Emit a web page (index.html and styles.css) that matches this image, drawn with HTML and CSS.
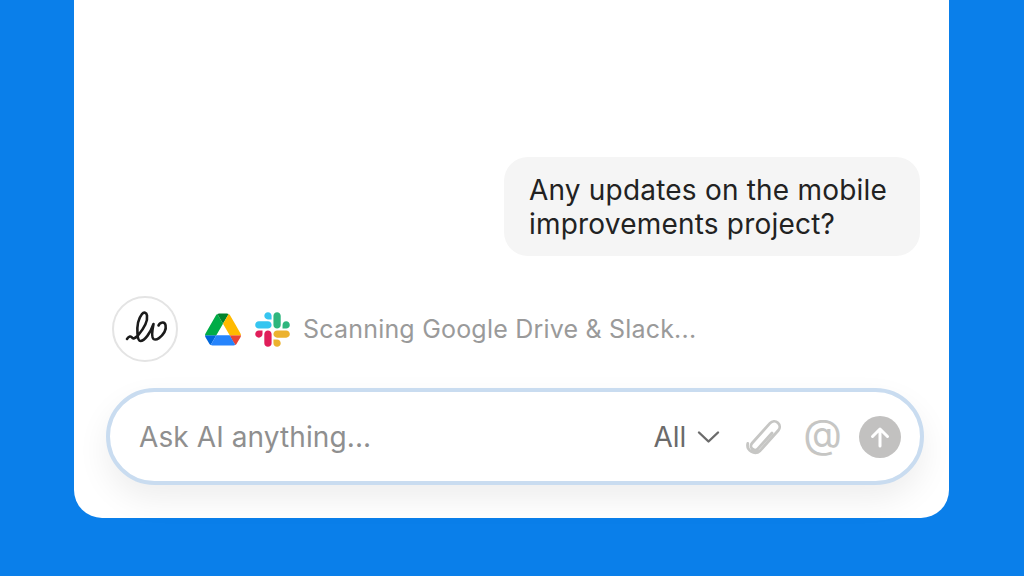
FILE: index.html

```html
<!DOCTYPE html>
<html lang="en">
<head>
    <meta charset="UTF-8">
    <meta name="viewport" content="width=device-width, initial-scale=1.0">
    <title>Ask AI</title>
    <link rel="stylesheet" href="styles.css">
</head>
<body>
    <div class="card">
        <div class="bubble">Any updates on the mobile improvements project?</div>

        <div class="status">
            <div class="avatar">
                <svg width="62" height="62" viewBox="2 2 62 62" fill="none" stroke="#1b1b1b" stroke-width="2.6" stroke-linecap="round" stroke-linejoin="round">
                    <path d="M15 43c2-3 4-3 5-1.500s3 1 6-2c5-6 10-14 9-20-.5-3-3-4-5-1.500-4 5-5 14-4.500 20 .3 4 1 7 3 7 4 0 10-8 13-17-1 5-2.500 13 0 15 3 2 8-2 11-7 2.500-5 1-10-2-9.500-2 .3-3.500 1.500-4 3"/>
                </svg>
            </div>
            <svg class="drive" width="36" height="33" viewBox="0 0 87.3 78">
                <path d="m6.6 66.85 3.85 6.65c.8 1.4 1.95 2.5 3.3 3.3l13.75-23.8h-27.5c0 1.55.4 3.1 1.2 4.5z" fill="#0066da"/>
                <path d="m43.65 25-13.75-23.8c-1.35.8-2.5 1.9-3.3 3.3l-25.4 44a9.06 9.06 0 0 0 -1.2 4.5h27.5z" fill="#00ac47"/>
                <path d="m73.55 76.8c1.35-.8 2.5-1.9 3.3-3.3l1.6-2.75 7.65-13.25c.8-1.4 1.2-2.95 1.2-4.5h-27.502l5.852 11.5z" fill="#ea4335"/>
                <path d="m43.65 25 13.75-23.8c-1.35-.8-2.9-1.2-4.5-1.2h-18.5c-1.6 0-3.15.45-4.5 1.2z" fill="#00832d"/>
                <path d="m59.8 53h-32.3l-13.75 23.8c1.35.8 2.9 1.2 4.5 1.2h50.8c1.6 0 3.15-.45 4.5-1.2z" fill="#2684fc"/>
                <path d="m73.4 26.5-12.7-22c-.8-1.4-1.95-2.5-3.3-3.3l-13.75 23.8 16.15 28h27.45c0-1.55-.4-3.1-1.2-4.5z" fill="#ffba00"/>
            </svg>
            <svg class="slack" width="35" height="35" viewBox="0 0 127 127">
                <path d="M27.2 80c0 7.3-5.9 13.2-13.2 13.2C6.7 93.2.8 87.3.8 80c0-7.3 5.9-13.2 13.2-13.2h13.2V80zm6.6 0c0-7.3 5.9-13.2 13.2-13.2 7.3 0 13.2 5.9 13.2 13.2v33c0 7.3-5.9 13.2-13.2 13.2-7.3 0-13.2-5.9-13.2-13.2V80z" fill="#E01E5A"/>
                <path d="M47 27c-7.3 0-13.2-5.9-13.2-13.2C33.8 6.5 39.7.6 47 .6c7.3 0 13.2 5.9 13.2 13.2V27H47zm0 6.7c7.3 0 13.2 5.9 13.2 13.2 0 7.3-5.9 13.2-13.2 13.2H13.9C6.6 60.1.7 54.2.7 46.9c0-7.3 5.9-13.2 13.2-13.2H47z" fill="#36C5F0"/>
                <path d="M99.9 46.9c0-7.3 5.9-13.2 13.2-13.2 7.3 0 13.2 5.9 13.2 13.2 0 7.3-5.9 13.2-13.2 13.2H99.9V46.9zm-6.6 0c0 7.3-5.9 13.2-13.2 13.2-7.3 0-13.2-5.9-13.2-13.2V13.8C66.9 6.5 72.8.6 80.1.6c7.3 0 13.2 5.9 13.2 13.2v33.1z" fill="#2EB67D"/>
                <path d="M80.1 99.8c7.3 0 13.2 5.9 13.2 13.2 0 7.3-5.9 13.2-13.2 13.2-7.3 0-13.2-5.9-13.2-13.2V99.8h13.2zm0-6.6c-7.3 0-13.2-5.9-13.2-13.2 0-7.3 5.9-13.2 13.2-13.2h33.1c7.3 0 13.2 5.9 13.2 13.2 0 7.3-5.9 13.2-13.2 13.2H80.1z" fill="#ECB22E"/>
            </svg>
            <span class="status-text">Scanning Google Drive &amp; Slack...</span>
        </div>

        <div class="ask">
            <span class="placeholder">Ask AI anything...</span>
            <span class="scope">All</span>
            <svg class="chevron" width="23" height="14" viewBox="0 0 23 14" fill="none" stroke="#6b6b6b" stroke-width="2.4" stroke-linecap="round" stroke-linejoin="round">
                <path d="M2 2.5l9.5 9 9.5-9"/>
            </svg>
            <svg class="clip" width="36" height="38" viewBox="0 0 36 38" fill="none" stroke="#c6c6c4" stroke-width="2.8" stroke-linecap="round" stroke-linejoin="round">
                <g transform="rotate(42 17 19)">
                    <path d="M21 10v21a4 4 0 0 1-8 0V4a5.500 5.500 0 0 1 11 0v27a7.500 7.500 0 0 1-14 3"/>
                </g>
            </svg>
            <span class="at">@</span>
            <span class="send">
                <svg width="22" height="22" viewBox="0 0 22 22" fill="none" stroke="#fff" stroke-width="3" stroke-linecap="round" stroke-linejoin="round">
                    <path d="M11 20V3M3.500 10.500L11 3l7.500 7.500"/>
                </svg>
            </span>
        </div>
    </div>
</body>
</html>
```

FILE: styles.css

```css
* {
    box-sizing: border-box;
}
body {
    margin: 0;
    height: 576px;
    overflow: hidden;
    background-color: #0a7fea;
    font-family: Inter, "Liberation Sans", sans-serif;
}
.card {
    width: 875px;
    height: 518px;
    margin-left: 74px;
    padding: 0 24px 33px 32px;
    background-color: #fff;
    border-radius: 0 0 28px 28px;
    display: flex;
    flex-direction: column;
    justify-content: flex-end;
    align-items: flex-start;
}
.bubble {
    width: 416px;
    align-self: flex-end;
    margin-right: 5px;
    padding: 16px 25px 15px;
    background-color: #f5f5f5;
    border-radius: 24px;
    color: #222;
    font-size: 28px;
    letter-spacing: 0.2px;
    line-height: 34px;
}
.status {
    display: flex;
    align-items: center;
    margin: 40px 0 26px 6px;
}
.avatar {
    width: 66px;
    height: 66px;
    border: 2px solid #e4e4e4;
    border-radius: 50%;
    display: flex;
    align-items: center;
    justify-content: center;
    margin-right: 27px;
}
.drive {
    margin-right: 14px;
}
.slack {
    margin-right: 13px;
}
.status-text {
    color: #9a9a9a;
    font-size: 25px;
    letter-spacing: 0.2px;
}
.ask {
    width: 818px;
    height: 97px;
    padding: 0 19px 0 29px;
    border: 4px solid #c9dcf0;
    border-radius: 49px;
    background-color: #fff;
    box-shadow: 0 14px 32px rgba(0, 0, 0, 0.07);
    display: flex;
    align-items: center;
}
.placeholder {
    flex: 1;
    color: #8f8f8f;
    font-size: 28px;
    letter-spacing: 0.1px;
}
.scope {
    color: #6b6b6b;
    font-size: 28px;
    margin-right: 11px;
}
.chevron {
    margin-right: 26px;
}
.clip {
    margin-right: 21px;
}
.at {
    color: #c6c6c4;
    font-size: 40px;
    margin-right: 17px;
    margin-bottom: 6px;
}
.send {
    width: 42px;
    height: 42px;
    border-radius: 50%;
    background-color: #c2c1c0;
    display: flex;
    align-items: center;
    justify-content: center;
}
```
